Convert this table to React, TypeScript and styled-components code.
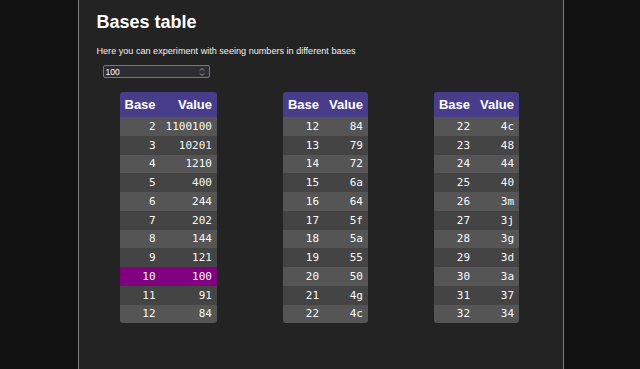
import React, { useState } from "react";
import styled, { createGlobalStyle } from "styled-components";

const GlobalStyle = createGlobalStyle`
  html, body {
    margin: 0;
    padding: 0;
    background: #121212;
  }
  body {
    font-family: "Liberation Sans", Arial, sans-serif;
    color: #fff;
  }
`;

const Page = styled.div`
  height: 369px;
  overflow: hidden;
  background: #121212;
  display: flex;
  justify-content: center;
`;

const Panel = styled.main`
  width: 466px;
  height: 369px;
  margin-left: 1px;
  padding: 0 0 0 18px;
  background: #232323;
  border-left: 1px solid #7a7a7a;
  border-right: 1px solid #7a7a7a;
`;

const Title = styled.h1`
  font-size: 18px;
  font-weight: bold;
  margin: 12px 0 0;
  line-height: 21px;
`;

const Subtitle = styled.p`
  font-size: 9.1px;
  margin: 13px 0 0;
  line-height: 11px;
  color: #f2f2f2;
`;

const InputBox = styled.div`
  margin: 8px 0 0 6px;
  width: 99px;
  height: 11px;
  border: 1px solid #77777d;
  border-radius: 2px;
  background: #2e2d33;
  display: flex;
  align-items: center;
  justify-content: space-between;
  padding: 0 4px 0 2px;
  box-sizing: content-box;
`;

const NumberInput = styled.input`
  background: transparent;
  border: none;
  outline: none;
  color: #fff;
  font-family: "Liberation Sans", Arial, sans-serif;
  font-size: 8.5px;
  padding: 0;
  width: 80px;
  height: 11px;
  &::-webkit-inner-spin-button,
  &::-webkit-outer-spin-button {
    -webkit-appearance: none;
    margin: 0;
  }
  -moz-appearance: textfield;
`;

const Tables = styled.div`
  display: flex;
  align-items: flex-start;
  gap: 66px;
  margin: 14px 0 0 23px;
`;

const Table = styled.table`
  border-collapse: separate;
  border-spacing: 0;
  border-radius: 3px;
  overflow: hidden;
`;

const HeadCell = styled.th<{ $align: "left" | "right" }>`
  background: #483d8b;
  font-family: "Liberation Sans", Arial, sans-serif;
  font-weight: bold;
  font-size: 13px;
  height: 25px;
  padding: 0 5px;
  text-align: ${(p) => p.$align};
  white-space: nowrap;
`;

const Row = styled.tr<{ $odd: boolean; $active: boolean }>`
  background: ${(p) => (p.$active ? "#800080" : p.$odd ? "#555555" : "#444444")};
`;

const Cell = styled.td`
  font-family: "DejaVu Sans Mono", "Liberation Mono", monospace;
  font-size: 11px;
  color: #fafafa;
  height: 18.75px;
  padding: 0 5px;
  text-align: right;
  white-space: nowrap;
`;

const Spinner = () => (
  <svg width="6" height="10" viewBox="0 0 6 10" fill="none">
    <path d="M1 3.5L3 1.5L5 3.5" stroke="#a9a9ae" strokeWidth="0.9" />
    <path d="M1 6.5L3 8.5L5 6.5" stroke="#a9a9ae" strokeWidth="0.9" />
  </svg>
);

const BaseTable: React.FC<{ value: number; from: number; to: number }> = ({ value, from, to }) => {
  const bases: number[] = [];
  for (let b = from; b <= to; b++) bases.push(b);
  return (
    <Table>
      <thead>
        <tr>
          <HeadCell $align="left">Base</HeadCell>
          <HeadCell $align="right">Value</HeadCell>
        </tr>
      </thead>
      <tbody>
        {bases.map((b, i) => (
          <Row key={b} $odd={i % 2 === 0} $active={b === 10}>
            <Cell>{b}</Cell>
            <Cell>{value.toString(b)}</Cell>
          </Row>
        ))}
      </tbody>
    </Table>
  );
};

const App: React.FC = () => {
  const [value, setValue] = useState(100);
  return (
    <Page>
      <GlobalStyle />
      <Panel>
        <Title>Bases table</Title>
        <Subtitle>Here you can experiment with seeing numbers in different bases</Subtitle>
        <InputBox>
          <NumberInput
            type="number"
            value={value}
            onChange={(e) => setValue(Number(e.target.value) || 0)}
          />
          <Spinner />
        </InputBox>
        <Tables>
          <BaseTable value={value} from={2} to={12} />
          <BaseTable value={value} from={12} to={22} />
          <BaseTable value={value} from={22} to={32} />
        </Tables>
      </Panel>
    </Page>
  );
};

export default App;
